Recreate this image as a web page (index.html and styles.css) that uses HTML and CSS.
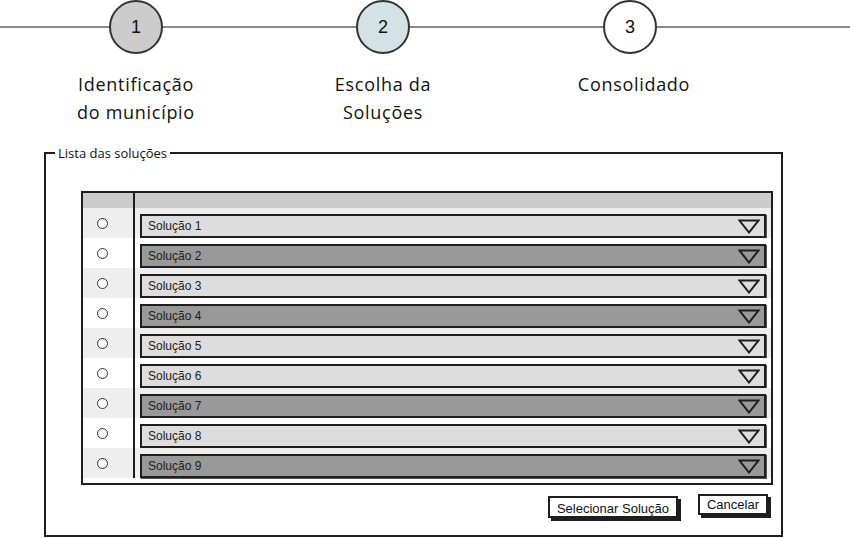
FILE: index.html
```html
<!DOCTYPE html>
<html lang="pt">
<head>
<meta charset="utf-8">
<title>Escolha da Soluções</title>
<link rel="stylesheet" href="styles.css">
</head>
<body>
<div class="stepper">
  <div class="track">
    <span class="seg seg-first"></span>
    <div class="step step-done">1</div>
    <span class="seg"></span>
    <div class="step step-current">2</div>
    <span class="seg"></span>
    <div class="step">3</div>
    <span class="seg seg-last"></span>
  </div>
  <div class="labels">
    <div class="label">Identificação<br>do município</div>
    <div class="label">Escolha da<br>Soluções</div>
    <div class="label">Consolidado</div>
  </div>
</div>

<fieldset class="panel">
  <legend class="panel-title">Lista das soluções</legend>
  <div class="panel-body">
    <div class="grid">
      <div class="col-select">
        <div class="head"></div>
        <div class="row odd"><span class="radio"></span></div>
        <div class="row"><span class="radio"></span></div>
        <div class="row odd"><span class="radio"></span></div>
        <div class="row"><span class="radio"></span></div>
        <div class="row odd"><span class="radio"></span></div>
        <div class="row"><span class="radio"></span></div>
        <div class="row odd"><span class="radio"></span></div>
        <div class="row"><span class="radio"></span></div>
        <div class="row odd"><span class="radio"></span></div>
      </div>
      <div class="col-main">
        <div class="head"></div>
        <div class="row odd"><div class="combo light"><span>Solução 1</span><svg class="caret" width="22" height="15" viewBox="0 0 22 15"><path d="M1.5 1.5 L20.5 1.5 L11 13.5 Z" fill="none" stroke="#1e1e1e" stroke-width="2"/></svg></div></div>
        <div class="row"><div class="combo dark"><span>Solução 2</span><svg class="caret" width="22" height="15" viewBox="0 0 22 15"><path d="M1.5 1.5 L20.5 1.5 L11 13.5 Z" fill="none" stroke="#1e1e1e" stroke-width="2"/></svg></div></div>
        <div class="row odd"><div class="combo light"><span>Solução 3</span><svg class="caret" width="22" height="15" viewBox="0 0 22 15"><path d="M1.5 1.5 L20.5 1.5 L11 13.5 Z" fill="none" stroke="#1e1e1e" stroke-width="2"/></svg></div></div>
        <div class="row"><div class="combo dark"><span>Solução 4</span><svg class="caret" width="22" height="15" viewBox="0 0 22 15"><path d="M1.5 1.5 L20.5 1.5 L11 13.5 Z" fill="none" stroke="#1e1e1e" stroke-width="2"/></svg></div></div>
        <div class="row odd"><div class="combo light"><span>Solução 5</span><svg class="caret" width="22" height="15" viewBox="0 0 22 15"><path d="M1.5 1.5 L20.5 1.5 L11 13.5 Z" fill="none" stroke="#1e1e1e" stroke-width="2"/></svg></div></div>
        <div class="row"><div class="combo light"><span>Solução 6</span><svg class="caret" width="22" height="15" viewBox="0 0 22 15"><path d="M1.5 1.5 L20.5 1.5 L11 13.5 Z" fill="none" stroke="#1e1e1e" stroke-width="2"/></svg></div></div>
        <div class="row odd"><div class="combo dark"><span>Solução 7</span><svg class="caret" width="22" height="15" viewBox="0 0 22 15"><path d="M1.5 1.5 L20.5 1.5 L11 13.5 Z" fill="none" stroke="#1e1e1e" stroke-width="2"/></svg></div></div>
        <div class="row"><div class="combo light"><span>Solução 8</span><svg class="caret" width="22" height="15" viewBox="0 0 22 15"><path d="M1.5 1.5 L20.5 1.5 L11 13.5 Z" fill="none" stroke="#1e1e1e" stroke-width="2"/></svg></div></div>
        <div class="row odd"><div class="combo dark"><span>Solução 9</span><svg class="caret" width="22" height="15" viewBox="0 0 22 15"><path d="M1.5 1.5 L20.5 1.5 L11 13.5 Z" fill="none" stroke="#1e1e1e" stroke-width="2"/></svg></div></div>
      </div>
    </div>
    <div class="actions">
      <button class="btn btn-primary">Selecionar Solução</button>
      <button class="btn">Cancelar</button>
    </div>
  </div>
</fieldset>
</body>
</html>
```

FILE: styles.css
```css
* { box-sizing: border-box; }

html, body {
  margin: 0;
  padding: 0;
  background: #ffffff;
}

body {
  width: 850px;
  height: 538px;
  overflow: hidden;
  font-family: "Liberation Sans", Arial, sans-serif;
  color: #1e1e1e;
}

/* ---------- stepper ---------- */
.track {
  display: flex;
  align-items: center;
  height: 54px;
}

.seg {
  display: block;
  width: 193px;
  height: 0;
  border-top: 2px solid #8a8a8a;
}

.seg-first { width: 109px; }
.seg-last { flex: 1; }

.step {
  width: 54px;
  height: 54px;
  flex: none;
  border: 2px solid #333333;
  border-radius: 50%;
  background: #ffffff;
  display: flex;
  align-items: center;
  justify-content: center;
  font-family: "Liberation Sans", Arial, sans-serif;
  font-size: 18px;
  color: #111;
}

.step-done { background: #cccccc; }
.step-current { background: #d2e2e5; }

.labels {
  display: grid;
  grid-template-columns: 248px 246px 256px;
  padding-left: 12px;
  margin-top: 16px;
}

.label {
  text-align: center;
  font-family: "Open Sans", sans-serif;
  font-size: 18px;
  letter-spacing: 0.7px;
  line-height: 28px;
  color: #111;
}

/* ---------- panel ---------- */
.panel {
  margin: 19px 0 0 44px;
  padding: 0;
  width: 739px;
  border: 2px solid #1e1e1e;
  min-width: 0;
}

.panel-title {
  margin-left: 9px;
  padding: 0 3px;
  font-family: "Open Sans", sans-serif;
  font-size: 13px;
  line-height: 16px;
  color: #111;
}

.panel-body {
  padding: 30px 8px 17px 35px;
}

.grid {
  display: flex;
  width: 692px;
  border: 2px solid #1e1e1e;
  padding-bottom: 5px;
}

.col-select {
  width: 50px;
  flex: none;
}

.col-main {
  flex: 1;
  border-left: 2px solid #1e1e1e;
}

.head {
  height: 15px;
  background: #cccccc;
}

.row {
  height: 30px;
  background: #ffffff;
}

.row.odd { background: #eeeeee; }

.col-select .row {
  display: flex;
  align-items: center;
  padding-left: 14px;
}

.radio {
  display: block;
  width: 11px;
  height: 11px;
  border: 1px solid #333;
  border-radius: 50%;
  background: #ffffff;
}

.col-main .row {
  padding: 6px 5px 0 5px;
}

.combo {
  height: 24px;
  border: 2px solid #1e1e1e;
  box-shadow: 1px 1px 0 #555;
  display: flex;
  align-items: center;
  justify-content: space-between;
  padding: 0 4px 0 6px;
  font-size: 12px;
  color: #1e1e1e;
}

.combo.light { background: #dddddd; }
.combo.dark { background: #999999; }

.caret {
  display: block;
  flex: none;
}

/* ---------- actions ---------- */
.actions {
  display: flex;
  justify-content: flex-end;
  align-items: flex-start;
  gap: 20px;
  margin-top: 9px;
  padding-right: 5px;
}

.btn {
  display: flex;
  align-items: center;
  justify-content: center;
  white-space: nowrap;
  font-family: "Liberation Sans", Arial, sans-serif;
  font-size: 13px;
  color: #111;
  background: #ffffff;
  border: 2px solid #1e1e1e;
  box-shadow: 3px 3px 0 #1e1e1e;
  height: 21px;
  padding: 0 7px;
  margin: 0;
  cursor: pointer;
}

.btn-primary {
  width: 130px;
  height: 22px;
  margin-top: 2px;
  padding-top: 2px;
}
```
